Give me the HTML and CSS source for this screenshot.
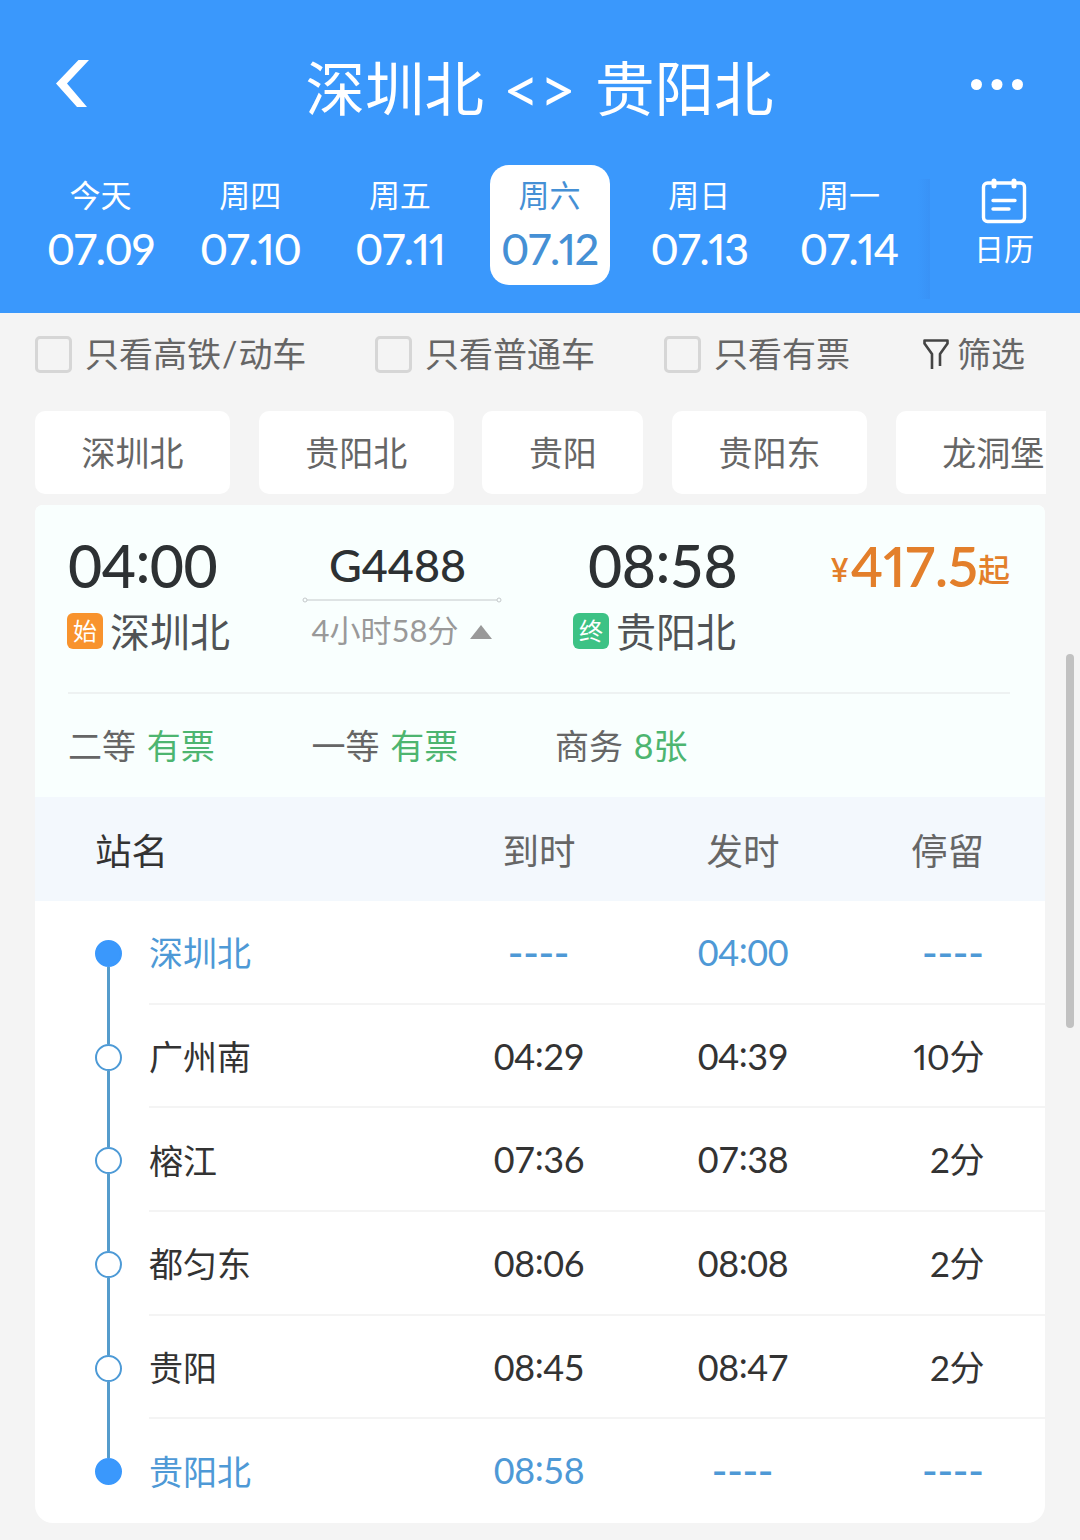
FILE: index.html
```html
<!DOCTYPE html>
<html lang="zh-CN">
<head>
    <meta charset="UTF-8">
    <meta name="viewport" content="width=device-width, initial-scale=1.0">
    <title>深圳北 - 贵阳北</title>
    <link rel="stylesheet" href="styles.css">
</head>
<body>
    <header class="header">
        <div class="title-bar">
            <svg class="back" width="34" height="50" viewBox="0 0 34 50"><path d="M22.500 0h10.500L11 23.500 31 47H21L0 23.500z" fill="#fff"/></svg>
            <h1 class="title"><span>深圳北</span><span class="arrows">&lt;&gt;</span><span>贵阳北</span></h1>
            <svg class="more" width="54" height="12" viewBox="0 0 54 12" fill="#fff"><circle cx="6.500" cy="5.500" r="5.500"/><circle cx="27" cy="5.500" r="5.500"/><circle cx="47.500" cy="5.500" r="5.500"/></svg>
        </div>
        <nav class="dates">
            <div class="day"><span class="week">今天</span><span class="date">07.09</span></div>
            <div class="day"><span class="week">周四</span><span class="date">07.10</span></div>
            <div class="day"><span class="week">周五</span><span class="date">07.11</span></div>
            <div class="day active"><span class="week">周六</span><span class="date">07.12</span></div>
            <div class="day"><span class="week">周日</span><span class="date">07.13</span></div>
            <div class="day"><span class="week">周一</span><span class="date">07.14</span></div>
            <div class="shade"></div>
            <div class="calendar">
                <svg width="46" height="46" viewBox="0 0 46 46" fill="none" stroke="#fff" stroke-width="3.4" stroke-linecap="round">
                    <rect x="2.5" y="5" width="41" height="38.5" rx="4"/>
                    <path d="M13 3v5M33 3v5" stroke-width="5"/>
                    <path d="M12 22.500h22M12 31h16"/>
                </svg>
                <span>日历</span>
            </div>
        </nav>
    </header>

    <main class="content">
        <!-- 筛选条件 -->
        <div class="filters">
            <label class="check first"><i class="box"></i>只看高铁<span class="slash">/</span>动车</label>
            <label class="check second"><i class="box"></i>只看普通车</label>
            <label class="check third"><i class="box"></i>只看有票</label>
            <div class="filter">
                <svg width="26" height="32" viewBox="0 0 26 32" fill="none" stroke="#444" stroke-width="2.6" stroke-linejoin="round"><path d="M9 31V16L1.5 5.500V2.500h23V5.500L17 16v12"/></svg>
                <span>筛选</span>
            </div>
        </div>

        <div class="stations">
            <span class="chip">深圳北</span>
            <span class="chip">贵阳北</span>
            <span class="chip">贵阳</span>
            <span class="chip">贵阳东</span>
            <span class="chip">龙洞堡</span>
        </div>

        <section class="card">
            <div class="summary">
                <div class="trip">
                    <div class="from">
                        <div class="time">04<i>:</i>00</div>
                        <div class="place"><span class="tag start">始</span>深圳北</div>
                    </div>
                    <div class="train">
                        <div class="number">G4488</div>
                        <svg width="200" height="6" viewBox="0 0 200 6" fill="none" stroke="#c4c8ca"><circle cx="3" cy="3" r="2"/><path d="M5 3h190"/><circle cx="197" cy="3" r="2"/></svg>
                        <div class="duration">4小时58分<svg width="22" height="14" viewBox="0 0 22 14"><path d="M11 0l11 14H0z" fill="#999"/></svg></div>
                    </div>
                    <div class="to">
                        <div class="time">08<i>:</i>58</div>
                        <div class="place"><span class="tag end">终</span>贵阳北</div>
                    </div>
                    <div class="price"><small class="yen">¥</small><b>417.5</b><small>起</small></div>
                </div>
                <div class="seats">
                    <div class="seat">二等 <em>有票</em></div>
                    <div class="seat">一等 <em>有票</em></div>
                    <div class="seat">商务 <em>8张</em></div>
                </div>
            </div>

            <!-- 经停站 -->
            <div class="stops-head">
                <span class="name">站名</span><span>到时</span><span>发时</span><span class="stay">停留</span>
            </div>
            <div class="stops">
                <div class="stop end-point">
                    <div class="rail"><b class="dot"></b></div>
                    <div class="cells"><span class="name">深圳北</span><span class="none">----</span><span>04<i>:</i>00</span><span class="stay none">----</span></div>
                </div>
                <div class="stop">
                    <div class="rail"><b class="dot"></b></div>
                    <div class="cells"><span class="name">广州南</span><span>04<i>:</i>29</span><span>04<i>:</i>39</span><span class="stay">10分</span></div>
                </div>
                <div class="stop">
                    <div class="rail"><b class="dot"></b></div>
                    <div class="cells"><span class="name">榕江</span><span>07<i>:</i>36</span><span>07<i>:</i>38</span><span class="stay">2分</span></div>
                </div>
                <div class="stop">
                    <div class="rail"><b class="dot"></b></div>
                    <div class="cells"><span class="name">都匀东</span><span>08<i>:</i>06</span><span>08<i>:</i>08</span><span class="stay">2分</span></div>
                </div>
                <div class="stop">
                    <div class="rail"><b class="dot"></b></div>
                    <div class="cells"><span class="name">贵阳</span><span>08<i>:</i>45</span><span>08<i>:</i>47</span><span class="stay">2分</span></div>
                </div>
                <div class="stop end-point">
                    <div class="rail"><b class="dot"></b></div>
                    <div class="cells"><span class="name">贵阳北</span><span>08<i>:</i>58</span><span class="none">----</span><span class="stay none">----</span></div>
                </div>
            </div>
        </section>
    </main>
    <div class="scrollbar"></div>
</body>
</html>
```

FILE: styles.css
```css
* {
    box-sizing: border-box;
}
body {
    margin: 0;
    width: 1080px;
    height: 1540px;
    overflow: hidden;
    background-color: #f4f4f4;
    color: #333;
    font-family: Lato, "Noto Sans CJK SC", sans-serif;
}
svg {
    display: block;
    flex: none;
}

/* 顶部 */
.header {
    height: 313px;
    background-color: #3a98fc;
    color: #fff;
}
.title-bar {
    display: flex;
    align-items: center;
    justify-content: space-between;
    height: 165px;
    padding: 4px 56px 0 56px;
}
.title {
    display: flex;
    align-items: center;
    gap: 19px;
    margin: 6px 0 0 19px;
    font-size: 59.500px;
    font-weight: 400;
    line-height: 80px;
}
.arrows {
    padding-top: 3px;
    font-size: 63px;
}
.dates {
    display: flex;
    padding-left: 25.500px;
}
.day {
    display: flex;
    flex: none;
    flex-direction: column;
    align-items: center;
    width: 120px;
    height: 120px;
    margin: 0 15px;
    padding-top: 9px;
    border-radius: 19px;
}
.dates .day:not(:first-child) {
    margin-left: 14.7px;
}
.day.active {
    background-color: #fff;
    color: #4590d5;
}
.week {
    font-size: 31px;
    line-height: 42px;
}
.date {
    font-size: 43px;
    font-weight: 500;
    line-height: 50px;
    margin-top: 8px;
    letter-spacing: -1.200px;
    font-variant-numeric: proportional-nums;
    font-kerning: none;
}
.shade {
    flex: none;
    width: 12px;
    height: 120px;
    margin: 14px 0 0 -6px;
    background: linear-gradient(to right, #3a98fc, #3992f6);
}
.calendar {
    display: flex;
    flex: none;
    flex-direction: column;
    align-items: center;
    width: 148px;
    padding-top: 13px;
    font-size: 30px;
    line-height: 44px;
}
.calendar span {
    margin-top: 2px;
}

/* 筛选 */
.content {
    padding: 0 34px 0 35px;
}
.filters {
    display: flex;
    height: 98px;
    padding-top: 16px;
    color: #666;
    font-size: 34px;
    line-height: 50px;
}
.check {
    display: flex;
    align-items: center;
    height: 50px;
}
.check.first {
    width: 340px;
}
.check.second {
    width: 289px;
}
.check.third {
    width: 259px;
}
.box {
    width: 37px;
    height: 37px;
    margin-right: 13px;
    border: 3px solid #d6d6d6;
    border-radius: 5px;
}
.slash {
    margin: 0 1px;
}
.filter {
    display: flex;
    align-items: center;
    gap: 8px;
    height: 50px;
}

.stations {
    display: flex;
    gap: 28.700px;
    height: 94px;
    overflow: hidden;
}
.chip {
    flex: none;
    height: 83px;
    padding: 0 46.500px;
    border-radius: 10px;
    background-color: #fff;
    color: #666;
    font-size: 34px;
    line-height: 84px;
}

/* 车次 */
.card {
    width: 1010px;
    height: 1018px;
    border-radius: 8px 8px 18px 18px;
    background-color: #fff;
    overflow: hidden;
}
.summary {
    height: 292px;
    padding: 0 35px 0 33px;
    background-color: #f9fffe;
}
.trip {
    display: flex;
    height: 189px;
    padding-top: 26px;
    border-bottom: 2px solid #eef2f2;
}
.from {
    width: 234px;
}
.time {
    color: #2d3133;
    font-size: 59px;
    font-weight: 500;
    line-height: 70px;
    letter-spacing: -0.500px;
}
/* 时间里的冒号居中 */
.time i,
.cells i {
    font-style: normal;
    line-height: 1;
    vertical-align: 0.09em;
}
.place {
    display: flex;
    align-items: center;
    margin-left: -1px;
    color: #505355;
    font-size: 40px;
    line-height: 62px;
}
.tag {
    width: 36px;
    height: 36px;
    margin-right: 7px;
    margin-top: -3px;
    border-radius: 6px;
    color: #fff;
    font-size: 24px;
    line-height: 35px;
    text-align: center;
}
.tag.start {
    background-color: #f8932d;
}
.tag.end {
    background-color: #3dc285;
}
.train {
    display: flex;
    flex-direction: column;
    align-items: center;
    width: 200px;
    color: #2d3133;
}
.number {
    margin-left: -9px;
    padding-top: 2px;
    font-size: 45px;
    font-weight: 500;
    line-height: 64px;
}
.duration {
    display: flex;
    align-items: center;
    gap: 12px;
    color: #999;
    font-size: 31px;
    line-height: 54px;
}
.duration svg {
    margin-top: 4px;
}
.to {
    width: 234px;
    margin-left: 72px;
}
.to .time {
    padding-left: 14px;
}
.price {
    flex: 1;
    color: #e37f2b;
    line-height: 70px;
    text-align: right;
    white-space: nowrap;
}
.price b {
    font-size: 55px;
    font-weight: 600;
    font-variant-numeric: proportional-nums;
    font-kerning: none;
}
.price small {
    font-size: 32px;
    font-weight: 500;
    line-height: 1;
    vertical-align: 5px;
}
.price .yen {
    margin-right: 2px;
    font-family: Inter, sans-serif;
    font-size: 32px;
    vertical-align: 5px;
}
.seats {
    display: flex;
    padding-top: 27px;
    font-size: 34px;
    line-height: 50px;
    color: #666;
}
.seat {
    width: 243.500px;
    word-spacing: 2px;
}
.seat em {
    color: #4db570;
    font-style: normal;
}

/* 经停站表 */
.stops-head,
.cells {
    display: grid;
    grid-template-columns: 288px 204px 204px 139px;
    align-items: center;
    text-align: center;
}
.stops-head {
    height: 104px;
    padding-left: 114px;
    background-color: #f3f8fd;
    color: #666;
    font-size: 36.500px;
}
.stops-head .name {
    margin-left: -54px;
    color: #333;
}
.name {
    text-align: left;
}
.stay {
    text-align: right;
}
.stop {
    display: flex;
    height: 103.700px;
}
.rail {
    display: flex;
    flex-direction: column;
    align-items: center;
    width: 114px;
    padding-left: 33px;
}
.rail::before,
.rail::after {
    content: "";
    width: 3px;
    background-color: #559ccc;
}
.rail::before {
    height: 39px;
}
.rail::after {
    flex: 1;
}
.stop:first-child .rail::before,
.stop:last-child .rail::after {
    background-color: transparent;
}
.dot {
    width: 27px;
    height: 27px;
    border: 2.500px solid #4d9ad6;
    border-radius: 50%;
}
.end-point .dot {
    border-color: #3a98fc;
    background-color: #3a98fc;
}
.cells {
    flex: 1;
    border-bottom: 2px solid #f4f4f4;
    font-size: 36px;
    letter-spacing: -0.400px;
}
.stop:last-child .cells {
    border-bottom-color: transparent;
}
.cells .name {
    font-size: 34px;
    letter-spacing: 0;
}
.cells .stay {
    font-size: 35px;
    line-height: 50px;
    font-variant-numeric: proportional-nums;
}
.end-point {
    color: #4e99d6;
}
.cells .none {
    font-family: "Liberation Sans", sans-serif;
    font-size: 44px;
    line-height: 50px;
    letter-spacing: 0.700px;
}

.scrollbar {
    position: fixed;
    top: 654px;
    right: 6px;
    width: 8px;
    height: 374px;
    border-radius: 4px;
    background-color: #c1c1c1;
}
```
